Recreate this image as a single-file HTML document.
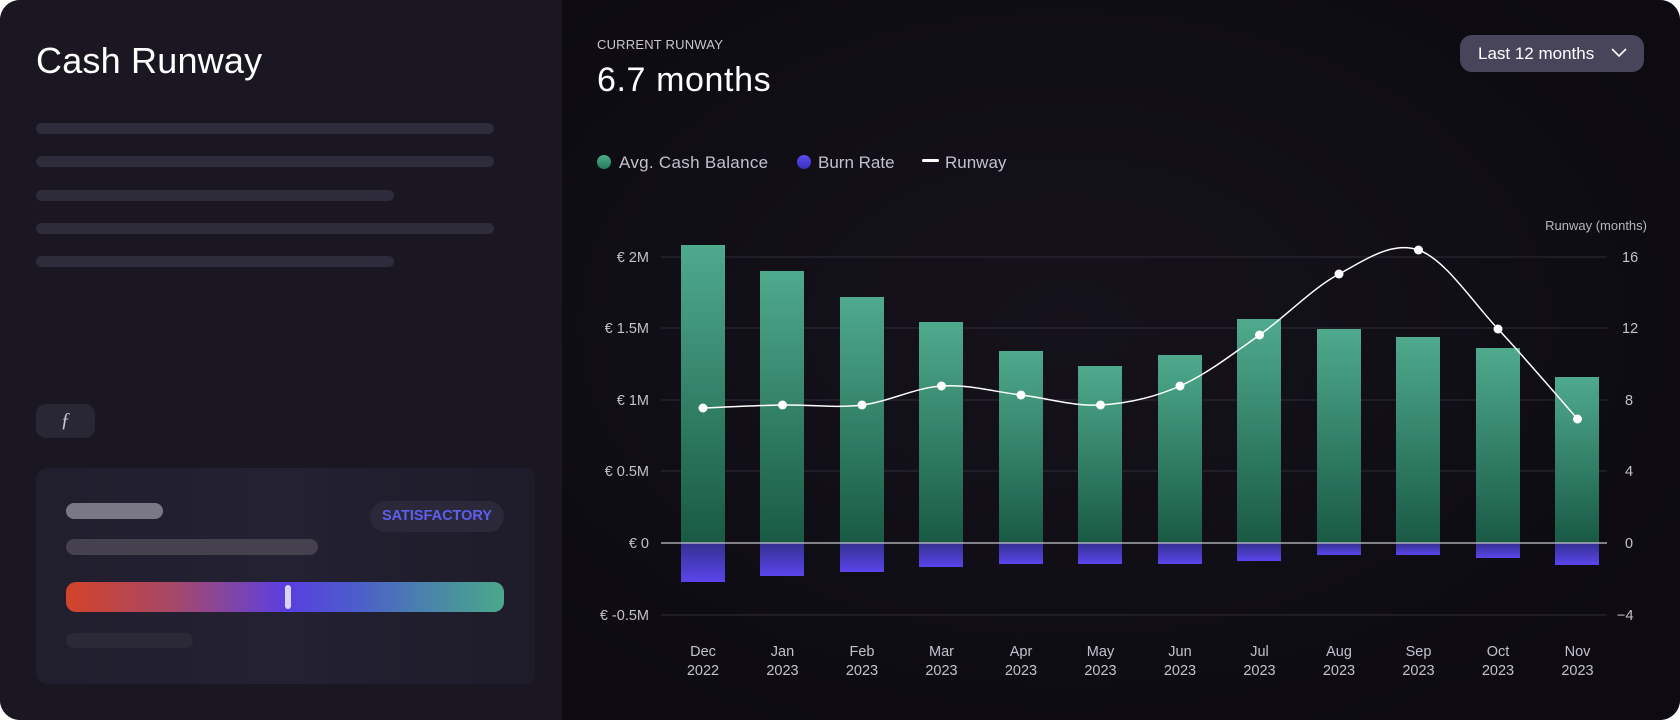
<!DOCTYPE html>
<html><head><meta charset="utf-8"><style>
*{margin:0;padding:0;box-sizing:border-box}
body{width:1680px;height:720px;background:#fff;font-family:"Liberation Sans",sans-serif;overflow:hidden;position:relative}
.wrap{position:absolute;left:0;top:0;width:1680px;height:720px;border-radius:20px;overflow:hidden;background:#0e0c13}
.left{position:absolute;left:0;top:0;width:562px;height:720px;background:#1a1723}
.right{position:absolute;left:562px;top:0;width:1118px;height:720px;background:radial-gradient(ellipse at 45% 45%,#15121c 0%,#0d0b11 80%)}
.abs{position:absolute}
.sk{position:absolute;height:11px;border-radius:6px;background:#2e2b3b;left:36px}
</style></head><body>
<div class="wrap">
<div class="left">
 <div class="abs" style="left:36px;top:40px;font-size:36px;color:#fff;letter-spacing:0.2px">Cash Runway</div>
 <div class="sk" style="top:123px;width:458px"></div>
 <div class="sk" style="top:156px;width:458px"></div>
 <div class="sk" style="top:190px;width:358px"></div>
 <div class="sk" style="top:223px;width:458px"></div>
 <div class="sk" style="top:256px;width:358px"></div>
 <div class="abs" style="left:36px;top:404px;width:59px;height:34px;border-radius:10px;background:#2a2735;color:#c9c6d4;font-family:'Liberation Serif',serif;font-style:italic;font-size:20px;text-align:center;line-height:33px">ƒ</div>
 <div class="abs" style="left:36px;top:468px;width:499px;height:216px;border-radius:12px;background:linear-gradient(90deg,#211f2e,#232132 50%,#1e1c29)">
  <div class="abs" style="left:30px;top:35px;width:97px;height:16px;border-radius:8px;background:#7a7787"></div>
  <div class="abs" style="left:30px;top:71px;width:252px;height:16px;border-radius:8px;background:#45414f"></div>
  <div class="abs" style="left:334px;top:33px;width:134px;height:31px;border-radius:16px;background:#2b2939;color:#5c5ff0;font-weight:bold;font-size:14.5px;text-align:center;line-height:31px">SATISFACTORY</div>
  <div class="abs" style="left:30px;top:114px;width:438px;height:30px;border-radius:10px;background:linear-gradient(90deg,#d2432a 0%,#a5486a 25%,#7a44b0 40%,#5a3ee0 50%,#4d5acd 65%,#4a7eaf 80%,#4aa88a 100%)"></div>
  <div class="abs" style="left:249px;top:117px;width:6px;height:24px;border-radius:3px;background:#d6d4ef"></div>
  <div class="abs" style="left:30px;top:165px;width:127px;height:15px;border-radius:8px;background:#2b2937"></div>
 </div>
</div>
<div class="right">
 <div class="abs" style="left:35px;top:37px;font-size:13px;color:#c9c6d2;letter-spacing:0.2px">CURRENT RUNWAY</div>
 <div class="abs" style="left:35px;top:61px;font-size:34px;color:#fff;letter-spacing:0.6px">6.7 months</div>
 <div class="abs" style="left:898px;top:35px;width:184px;height:37px;border-radius:12px;background:#48445a;color:#fff;font-size:17px;line-height:37px;padding-left:18px">Last 12 months
  <svg class="abs" style="left:150px;top:12px" width="18" height="12" viewBox="0 0 18 12"><path d="M2 2 L9 9 L16 2" fill="none" stroke="#fff" stroke-width="1.6"/></svg>
 </div>
</div>
<svg class="abs" style="left:0;top:0" width="1680" height="720" viewBox="0 0 1680 720" font-family="Liberation Sans, sans-serif">
 <defs>
  <linearGradient id="g" x1="0" y1="0" x2="0" y2="1"><stop offset="0" stop-color="#4faa8d"/><stop offset="1" stop-color="#195a45"/></linearGradient>
  <linearGradient id="b" x1="0" y1="0" x2="0" y2="1"><stop offset="0" stop-color="#34308f"/><stop offset="1" stop-color="#5a45ec"/></linearGradient>
  <linearGradient id="dg" x1="0" y1="0" x2="0" y2="1"><stop offset="0" stop-color="#4fae8c"/><stop offset="1" stop-color="#237a5c"/></linearGradient>
  <linearGradient id="db" x1="0" y1="0" x2="0" y2="1"><stop offset="0" stop-color="#5a4ef0"/><stop offset="1" stop-color="#3a30b8"/></linearGradient>
 </defs>
 <g font-size="17" fill="#c4c1cf">
  <circle cx="604" cy="162" r="7" fill="url(#dg)"/><text x="619" y="168" letter-spacing="0.3">Avg. Cash Balance</text>
  <circle cx="804" cy="162" r="7" fill="url(#db)"/><text x="818" y="168">Burn Rate</text>
  <rect x="922" y="159" width="17" height="3" rx="1.5" fill="#fff"/><text x="945" y="168">Runway</text>
 </g>
 <text x="1647" y="230" font-size="13" fill="#b8b5c3" text-anchor="end">Runway (months)</text>
 <g stroke="#2a2733" stroke-width="1.2">
  <line x1="661" y1="257" x2="1607" y2="257"/><line x1="661" y1="328" x2="1607" y2="328"/><line x1="661" y1="400" x2="1607" y2="400"/><line x1="661" y1="471" x2="1607" y2="471"/><line x1="661" y1="615" x2="1607" y2="615"/>
 </g>
 <g font-size="14.5" fill="#c4c1cf" text-anchor="end">
  <text x="649" y="262">€ 2M</text><text x="649" y="333">€ 1.5M</text><text x="649" y="405">€ 1M</text><text x="649" y="476">€ 0.5M</text><text x="649" y="548">€ 0</text><text x="649" y="620">€ -0.5M</text>
 </g>
 <g font-size="14.5" fill="#c4c1cf">
  <text x="1622" y="262">16</text><text x="1622" y="333">12</text><text x="1625" y="405">8</text><text x="1625" y="476">4</text><text x="1625" y="548">0</text><text x="1617" y="620">−4</text>
 </g>
 <g fill="url(#g)">
  <rect x="681" y="245" width="44" height="298"/><rect x="760" y="271" width="44" height="272"/><rect x="840" y="297" width="44" height="246"/><rect x="919" y="322" width="44" height="221"/><rect x="999" y="351" width="44" height="192"/><rect x="1078" y="366" width="44" height="177"/><rect x="1158" y="355" width="44" height="188"/><rect x="1237" y="319" width="44" height="224"/><rect x="1317" y="329" width="44" height="214"/><rect x="1396" y="337" width="44" height="206"/><rect x="1476" y="348" width="44" height="195"/><rect x="1555" y="377" width="44" height="166"/>
 </g>
 <g fill="url(#b)">
  <rect x="681" y="543" width="44" height="39"/><rect x="760" y="543" width="44" height="33"/><rect x="840" y="543" width="44" height="29"/><rect x="919" y="543" width="44" height="24"/><rect x="999" y="543" width="44" height="21"/><rect x="1078" y="543" width="44" height="21"/><rect x="1158" y="543" width="44" height="21"/><rect x="1237" y="543" width="44" height="18"/><rect x="1317" y="543" width="44" height="12"/><rect x="1396" y="543" width="44" height="12"/><rect x="1476" y="543" width="44" height="15"/><rect x="1555" y="543" width="44" height="22"/>
 </g>
 <line x1="661" y1="543" x2="1607" y2="543" stroke="#c8c6d0" stroke-width="1.3"/>
 <path d="M703 408 C716.25 407.5 756 405.5 782.5 405 C809 404.5 835.5 408.2 862 405 C888.5 401.8 915 387.7 941.5 386 C968 384.3 994.5 391.8 1021 395 C1047.5 398.2 1074 406.5 1100.5 405 C1127 403.5 1153.5 397.7 1180 386 C1206.5 374.3 1233 353.7 1259.5 335 C1286 316.3 1312.5 288.2 1339 274 C1365.5 259.8 1392 240.8 1418.5 250 C1445 259.2 1471.5 300.8 1498 329 C1524.5 357.2 1564.25 404 1577.5 419" fill="none" stroke="#fff" stroke-width="1.5"/>
 <g fill="#fff">
  <circle cx="703" cy="408" r="4.5"/><circle cx="782.5" cy="405" r="4.5"/><circle cx="862" cy="405" r="4.5"/><circle cx="941.5" cy="386" r="4.5"/><circle cx="1021" cy="395" r="4.5"/><circle cx="1100.5" cy="405" r="4.5"/><circle cx="1180" cy="386" r="4.5"/><circle cx="1259.5" cy="335" r="4.5"/><circle cx="1339" cy="274" r="4.5"/><circle cx="1418.5" cy="250" r="4.5"/><circle cx="1498" cy="329" r="4.5"/><circle cx="1577.5" cy="419" r="4.5"/>
 </g>
 <g font-size="14.5" fill="#c4c1cf" text-anchor="middle">
  <text x="703" y="656">Dec</text><text x="703" y="675">2022</text>
  <text x="782.5" y="656">Jan</text><text x="782.5" y="675">2023</text>
  <text x="862" y="656">Feb</text><text x="862" y="675">2023</text>
  <text x="941.5" y="656">Mar</text><text x="941.5" y="675">2023</text>
  <text x="1021" y="656">Apr</text><text x="1021" y="675">2023</text>
  <text x="1100.5" y="656">May</text><text x="1100.5" y="675">2023</text>
  <text x="1180" y="656">Jun</text><text x="1180" y="675">2023</text>
  <text x="1259.5" y="656">Jul</text><text x="1259.5" y="675">2023</text>
  <text x="1339" y="656">Aug</text><text x="1339" y="675">2023</text>
  <text x="1418.5" y="656">Sep</text><text x="1418.5" y="675">2023</text>
  <text x="1498" y="656">Oct</text><text x="1498" y="675">2023</text>
  <text x="1577.5" y="656">Nov</text><text x="1577.5" y="675">2023</text>
 </g>
</svg>
</div>
</body></html>
